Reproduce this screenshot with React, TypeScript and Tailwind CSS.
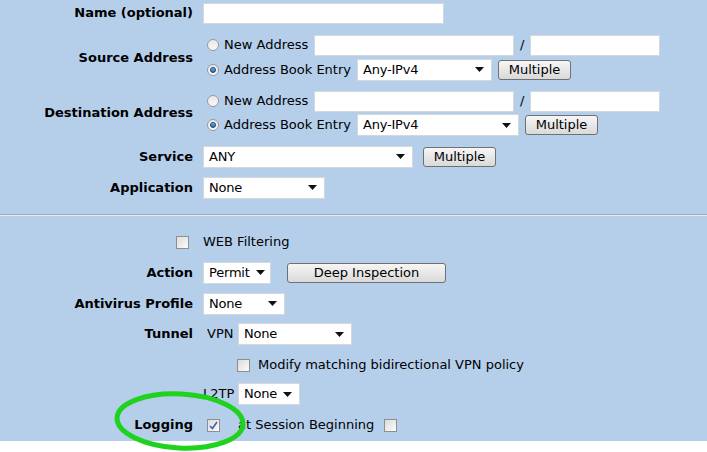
import React from "react";

const font = { fontFamily: '"DejaVu Sans", Verdana, sans-serif' };

function Label({ children }: { children?: React.ReactNode }) {
  return (
    <div className="w-[193px] shrink-0 text-right text-[13px] font-bold text-black">
      {children}
    </div>
  );
}

function TextBox({ w }: { w: string }) {
  return <div className={`${w} h-[21px] border border-[#d4d8dc] bg-white`} />;
}

function Select({ w, value }: { w: string; value: string }) {
  return (
    <div
      className={`${w} flex h-[22px] items-center justify-between gap-[6px] border border-[#d4d8dc] bg-white pl-[5px] pr-[7px] text-[13px] tracking-[-0.2px] text-black`}
    >
      <span className="whitespace-nowrap">{value}</span>
      <svg className="shrink-0" width="9" height="5" viewBox="0 0 9 5">
        <path d="M0 0h9L4.5 5z" fill="#111" />
      </svg>
    </div>
  );
}

function Button({ w, children }: { w: string; children: React.ReactNode }) {
  return (
    <div
      className={`${w} flex h-[20px] items-center justify-center rounded-[3px] border border-[#707070] bg-gradient-to-b from-[#f6f6f6] to-[#d9d9d9] text-[13px] text-black`}
    >
      {children}
    </div>
  );
}

function Radio({ checked }: { checked?: boolean }) {
  return (
    <div className="flex h-[12px] w-[12px] items-center justify-center rounded-full border border-[#9a9a9a] bg-gradient-to-b from-[#e8e8e8] to-[#f8f8f8]">
      {checked && (
        <div className="h-[6px] w-[6px] rounded-full border border-[#1e3f6e] bg-gradient-to-b from-[#6ab8f0] to-[#1a6fb5]" />
      )}
    </div>
  );
}

function Checkbox({ checked }: { checked?: boolean }) {
  return (
    <div className="flex h-[13px] w-[13px] items-center justify-center border border-[#8e8e8e] bg-gradient-to-br from-[#dcdcdc] to-[#fbfbfb]">
      {checked && (
        <svg width="9" height="9" viewBox="0 0 9 9">
          <path d="M1 5l2.5 2.5L8 1" fill="none" stroke="#4a5fa8" strokeWidth="1.6" />
        </svg>
      )}
    </div>
  );
}

export default function App() {
  return (
    <div className="relative min-h-screen w-[707px] bg-white text-[13px] text-black" style={font}>
      <div className="h-[441px] bg-[#b5cfeb]">
        {/* Name */}
        <div className="flex h-[26px] items-center gap-[10px]">
          <Label>Name (optional)</Label>
          <TextBox w="w-[241px]" />
        </div>

        {/* Source address */}
        <div className="mt-[7px] flex items-center gap-[10px]">
          <Label>Source Address</Label>
          <div className="flex flex-col">
            <div className="flex h-[24px] items-center">
              <div className="ml-[4px]"><Radio /></div>
              <span className="ml-[5px] w-[90px]">New Address</span>
              <TextBox w="w-[200px]" />
              <span className="mx-[6px]">/</span>
              <TextBox w="w-[130px]" />
            </div>
            <div className="flex h-[25px] items-center">
              <div className="ml-[4px]"><Radio checked /></div>
              <span className="ml-[5px] w-[133px]">Address Book Entry</span>
              <Select w="w-[135px]" value="Any-IPv4" />
              <div className="ml-[6px]"><Button w="w-[73px]">Multiple</Button></div>
            </div>
          </div>
        </div>

        {/* Destination address */}
        <div className="mt-[7px] flex items-center gap-[10px]">
          <Label>Destination Address</Label>
          <div className="flex flex-col">
            <div className="flex h-[24px] items-center">
              <div className="ml-[4px]"><Radio /></div>
              <span className="ml-[5px] w-[90px]">New Address</span>
              <TextBox w="w-[200px]" />
              <span className="mx-[6px]">/</span>
              <TextBox w="w-[130px]" />
            </div>
            <div className="flex h-[24px] items-center">
              <div className="ml-[4px]"><Radio checked /></div>
              <span className="ml-[5px] w-[133px]">Address Book Entry</span>
              <Select w="w-[162px]" value="Any-IPv4" />
              <div className="ml-[6px]"><Button w="w-[73px]">Multiple</Button></div>
            </div>
          </div>
        </div>

        {/* Service */}
        <div className="mt-[7px] flex h-[25px] items-center gap-[10px]">
          <Label>Service</Label>
          <Select w="w-[210px]" value="ANY" />
          <Button w="w-[73px]">Multiple</Button>
        </div>

        {/* Application */}
        <div className="mt-[6px] flex h-[25px] items-center gap-[10px]">
          <Label>Application</Label>
          <Select w="w-[122px]" value="None" />
        </div>

        <div className="mt-[14px] h-[1px] bg-[#a9a9a9]" />
        <div className="h-[1px] bg-[#e4ecf5]" />

        {/* WEB filtering */}
        <div className="mt-[14px] flex h-[24px] items-center gap-[10px]">
          <Label>
            <div className="flex justify-end pr-[4px]"><Checkbox /></div>
          </Label>
          <span>WEB Filtering</span>
        </div>

        {/* Action */}
        <div className="mt-[6px] flex h-[25px] items-center gap-[10px]">
          <Label>Action</Label>
          <Select w="w-[68px]" value="Permit" />
          <div className="ml-[6px]"><Button w="w-[159px]">Deep Inspection</Button></div>
        </div>

        {/* Antivirus */}
        <div className="mt-[6px] flex h-[25px] items-center gap-[10px]">
          <Label>Antivirus Profile</Label>
          <Select w="w-[82px]" value="None" />
        </div>

        {/* Tunnel */}
        <div className="mt-[6px] flex h-[24px] items-center gap-[10px]">
          <Label>Tunnel</Label>
          <span className="ml-[4px] w-[31px]">VPN</span>
          <div className="-ml-[10px]"><Select w="w-[114px]" value="None" /></div>
        </div>

        <div className="mt-[7px] flex h-[24px] items-center gap-[10px]">
          <Label />
          <div className="ml-[34px]"><Checkbox /></div>
          <span className="-ml-[2px]">Modify matching bidirectional VPN policy</span>
        </div>

        <div className="mt-[5px] flex h-[24px] items-center gap-[10px]">
          <Label />
          <span className="w-[31px]">L2TP</span>
          <div className="-ml-[6px]"><Select w="w-[62px]" value="None" /></div>
        </div>

        {/* Logging */}
        <div className="mt-[7px] flex h-[24px] items-center gap-[10px]">
          <Label>Logging</Label>
          <div className="ml-[4px]"><Checkbox checked /></div>
          <span className="ml-[8px]">at Session Beginning</span>
          <Checkbox />
        </div>
      </div>

      {/* green highlight ellipse */}
      <svg className="pointer-events-none absolute left-[108px] top-[388px]" width="145" height="66" viewBox="0 0 145 66">
        <ellipse cx="72" cy="33" rx="63" ry="27" fill="none" stroke="#1ed21e" strokeWidth="5" transform="rotate(3 72 33)" />
      </svg>
    </div>
  );
}
